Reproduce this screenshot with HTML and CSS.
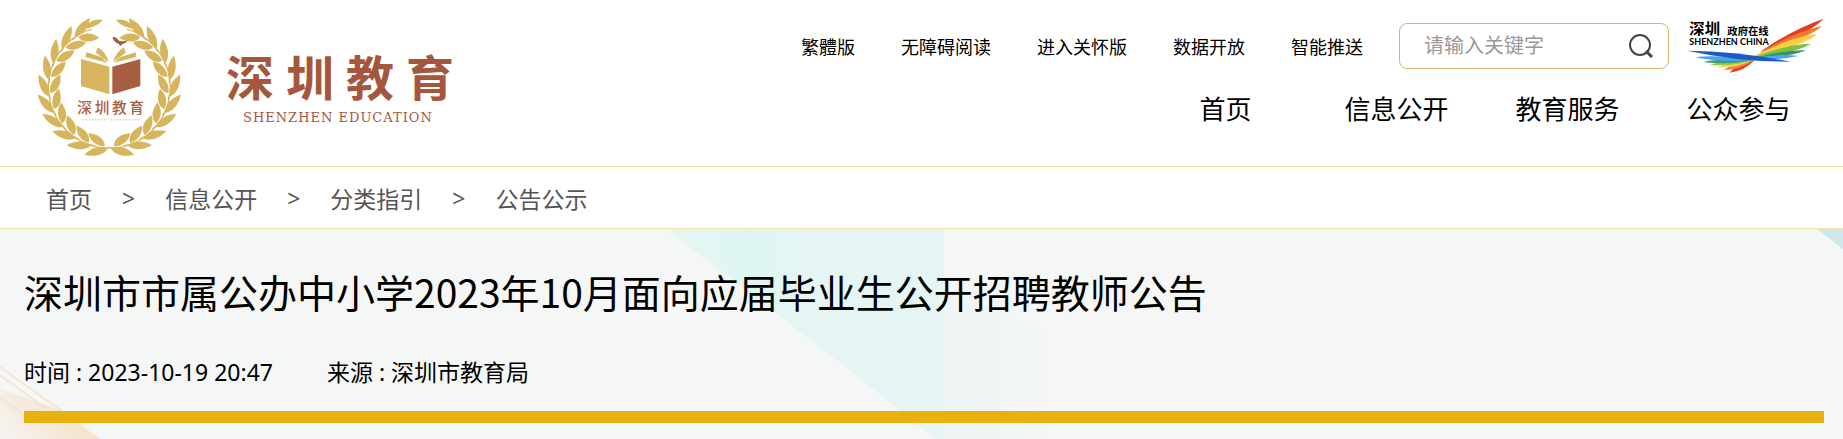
FILE: index.html
```html
<!DOCTYPE html>
<html lang="zh-CN">
<head>
    <meta charset="UTF-8">
    <meta name="viewport" content="width=device-width, initial-scale=1.0">
    <title>深圳市市属公办中小学2023年10月面向应届毕业生公开招聘教师公告</title>
    <link rel="stylesheet" href="styles.css">
</head>
<body>
    <header class="header">
        <a class="brand" href="#" aria-label="深圳教育">
            <svg class="emblem" viewBox="0 0 540 495">
                <defs>
                    <g id="leaf">
                        <path d="M270 446C250 437 222 442 200 467C232 474 258 464 270 446Z"/>
                        <path d="M260 440C262 420 240 402 210 402C216 426 236 440 260 440Z"/>
                        <path d="M280 440Q250 447 214 434L214 438Q250 451 280 444Z"/>
                    </g>
                    <g id="branch">
                        <use href="#leaf" transform="rotate(2 268 262)"/>
                        <use href="#leaf" transform="rotate(18 268 262)"/>
                        <use href="#leaf" transform="rotate(34 268 262)"/>
                        <use href="#leaf" transform="rotate(50 268 262)"/>
                        <use href="#leaf" transform="rotate(66 268 262)"/>
                        <use href="#leaf" transform="rotate(82 268 262)"/>
                        <use href="#leaf" transform="rotate(98 268 262)"/>
                        <use href="#leaf" transform="rotate(114 268 262)"/>
                        <use href="#leaf" transform="rotate(130 268 262)"/>
                        <use href="#leaf" transform="rotate(146 268 262)"/>
                    </g>
                </defs>
                <g fill="#d6b55e">
                    <use href="#branch"/>
                    <use href="#branch" transform="translate(536 0) scale(-1 1)"/>
                    <path d="M190 88C202 66 226 54 248 60C238 74 214 84 190 88Z"/>
                    <path d="M346 88C334 66 310 54 288 60C298 74 322 84 346 88Z"/>
                    <path d="M183 177L268 200V283L183 258Z"/>
                    <path d="M200 157L246 172L262 188L196 171Z"/>
                    <path d="M233 142Q258 156 266 186L228 158Z"/>
                    <path d="M312 142Q288 156 279 186L317 158Z"/>
                    <path d="M347 157L300 172L282 188L349 171Z"/>
                </g>
                <g fill="#a85e42">
                    <path d="M277 200L361 177V258L277 283Z"/>
                    <path d="M277 112Q288 108 294 119Q300 127 323 121Q316 132 307 133L300 139L297 132Q282 128 277 112Z"/>
                </g>
                <text class="emblem-name" x="172" y="340">深圳教育</text>
                <path d="M188 359H262M272 359H357" stroke="#e6d3cc" stroke-width="5" stroke-dasharray="5 4"/>
            </svg>
            <span class="wordmark">
                <span class="wordmark-cn">深圳教育</span>
                <span class="wordmark-en">SHENZHEN EDUCATION</span>
            </span>
        </a>
        <div class="header-right">
            <div class="tools">
                <nav class="tool-links">
                    <a href="#" lang="zh-TW">繁體版</a>
                    <a href="#">无障碍阅读</a>
                    <a href="#">进入关怀版</a>
                    <a href="#">数据开放</a>
                    <a href="#">智能推送</a>
                </nav>
                <form class="search">
                    <input type="text" placeholder="请输入关键字" aria-label="请输入关键字">
                    <button type="button" aria-label="搜索">
                        <svg viewBox="0 0 24 24" fill="none" stroke="#444" stroke-width="2">
                            <circle cx="11" cy="11" r="10"/>
                            <path d="M17 17L23 23" stroke-width="3"/>
                        </svg>
                    </button>
                </form>
                <a class="gov" href="#" aria-label="深圳政府在线">
                    <svg viewBox="21 42 411 165">
                        <path fill="#f0a23c" d="M213 164Q330 84 424 67Q400 96 213 164Z"/>
                        <path fill="#e63a24" d="M240 144Q330 80 430 44Q400 82 240 144Z"/>
                        <path fill="#ee7a2e" d="M250 140Q340 86 424 67Q400 92 250 140Z"/>
                        <path fill="#fbcf45" d="M213 164Q320 100 412 91Q380 120 213 164Z"/>
                        <path fill="#7cc142" d="M213 164Q310 122 393 119Q350 146 213 164Z"/>
                        <path fill="#3c9168" d="M213 166Q300 138 378 139Q330 160 213 166Z"/>
                        <path fill="#4aa3f5" d="M213 164Q300 148 355 156Q300 168 213 168Z"/>
                        <path fill="#e63a24" d="M225 168Q170 180 149 206Q190 202 225 168Z"/>
                        <path fill="#f08a34" d="M222 168Q160 176 131 198Q180 198 222 168Z"/>
                        <path fill="#fbd65a" d="M220 168Q150 172 112 190Q170 192 220 168Z"/>
                        <path fill="#8ccb4a" d="M220 168Q130 166 90 183Q160 188 220 168Z"/>
                        <path fill="#3f9e72" d="M220 168Q120 162 69 174Q140 184 220 168Z"/>
                        <path fill="#4aa3f5" d="M220 168Q100 150 44 160Q120 176 220 168Z"/>
                        <path fill="#1b5bc4" d="M22 140Q180 142 331 173Q180 174 22 140Z"/>
                        <text class="gov-name" x="28" y="91">深圳</text>
                        <text class="gov-sub" x="142" y="93">政府在线</text>
                        <text class="gov-en" x="28" y="122">SHENZHEN CHINA</text>
                    </svg>
                </a>
            </div>
            <nav class="main-nav">
                <a href="#">首页</a>
                <a href="#">信息公开</a>
                <a href="#">教育服务</a>
                <a href="#">公众参与</a>
            </nav>
        </div>
    </header>

    <nav class="breadcrumb">
        <a href="#">首页</a>
        <span>&gt;</span>
        <a href="#">信息公开</a>
        <span>&gt;</span>
        <a href="#">分类指引</a>
        <span>&gt;</span>
        <a href="#">公告公示</a>
    </nav>

    <main class="article">
        <svg class="backdrop" viewBox="0 0 1843 210" preserveAspectRatio="xMidYMin slice" aria-hidden="true">
            <defs>
                <linearGradient id="teal" x1="0" y1="0" x2="1" y2="0">
                    <stop offset="0" stop-color="#e8f6f4"/>
                    <stop offset="0.3" stop-color="#def6f1"/>
                    <stop offset="0.5" stop-color="#e5f5f3"/>
                    <stop offset="1" stop-color="#e4f5f3"/>
                </linearGradient>
                <linearGradient id="sand" x1="0" y1="1" x2="1" y2="0.6">
                    <stop offset="0" stop-color="#f6f4f1"/>
                    <stop offset="1" stop-color="#f4dfc4"/>
                </linearGradient>
                <linearGradient id="mist" x1="0" y1="0" x2="1" y2="0">
                    <stop offset="0" stop-color="#eef5f4"/>
                    <stop offset="1" stop-color="#f3f6f5"/>
                </linearGradient>
            </defs>
            <path d="M665 0H944V210H935Q800 100 665 0Z" fill="url(#teal)"/>
            <path d="M944 60L1043 100V210H944Z" fill="url(#mist)"/>
            <path d="M1817 0H1843V20Z" fill="#cfe6ec"/>
            <path d="M0 160L30 170L62 182L100 210H0Z" fill="url(#sand)"/>
            <path d="M0 138L62 182M0 146L52 184M0 168L26 188" fill="none" stroke="#f6e4cf" stroke-width="2"/>
        </svg>
        <h1>深圳市市属公办中小学2023年10月面向应届毕业生公开招聘教师公告</h1>
        <div class="meta">
            <span>时间 : 2023-10-19 20:47</span>
            <span>来源 : 深圳市教育局</span>
        </div>
        <hr>
    </main>
</body>
</html>
```

FILE: styles.css
```css
* {
    box-sizing: border-box;
}

body {
    margin: 0;
    min-height: 100vh;
    display: flex;
    flex-direction: column;
    font-family: "Noto Sans", "Noto Sans CJK SC", sans-serif;
    color: #000;
    background-color: #fff;
}

a {
    color: inherit;
    text-decoration: none;
}

.header {
    display: flex;
    justify-content: space-between;
    padding-right: 19px;
    border-bottom: 1px solid #f3e2a6;
}

.brand {
    display: flex;
    padding: 0 0 1px 20px;
    color: #a5573e;
}

.emblem {
    width: 180px;
    height: 165px;
}

.emblem-name {
    font-size: 44px;
    font-weight: 500;
    letter-spacing: 8px;
    fill: #a85e42;
}

.wordmark {
    display: flex;
    flex-direction: column;
    padding: 48px 0 0 26px;
}

.wordmark-cn {
    font-size: 48px;
    font-weight: bold;
    line-height: 60px;
    letter-spacing: 12px;
}

.wordmark-en {
    padding-left: 17px;
    font-family: "DejaVu Serif", serif;
    font-size: 13px;
    line-height: 20px;
    letter-spacing: 1px;
}

.header-right {
    display: flex;
    flex-direction: column;
    align-items: flex-end;
    padding-top: 18px;
}

.tools {
    display: flex;
    align-items: center;
}

.tool-links {
    display: flex;
    gap: 46px;
    margin-right: 36px;
    font-size: 18px;
}

.search {
    display: flex;
    align-items: center;
    width: 270px;
    height: 46px;
    margin-right: 18px;
    padding: 0 15px 0 24px;
    border: 1px solid #d3b76c;
    border-radius: 8px;
}

.search input {
    flex: 1;
    min-width: 0;
    padding: 0;
    border: none;
    outline: none;
    background: none;
    font-family: inherit;
    font-size: 20px;
}

.search input::placeholder {
    color: #999;
}

.search button {
    width: 24px;
    height: 24px;
    padding: 0;
    border: none;
    background: none;
    cursor: pointer;
}

.search svg,
.gov svg {
    display: block;
}

.gov svg {
    width: 137px;
    height: 55px;
}

.gov-name {
    font-size: 46px;
    font-weight: bold;
}

.gov-sub {
    font-size: 31px;
    font-weight: bold;
}

.gov-en {
    font-family: Lato, sans-serif;
    font-size: 27px;
    font-weight: bold;
}

.main-nav {
    display: flex;
    margin-top: 17px;
    font-size: 26px;
    line-height: 38px;
}

.main-nav a {
    width: 171px;
    text-align: center;
}

.breadcrumb {
    display: flex;
    align-items: center;
    gap: 30px;
    height: 62px;
    padding: 0 46px;
    border-bottom: 1px solid #f3e2a6;
    font-size: 23px;
    color: #555;
}

.article {
    position: relative;
    flex: 1;
    padding: 36px 19px 16px 24px;
    background-color: #f5f7f6;
    overflow: hidden;
}

.backdrop {
    position: absolute;
    top: 0;
    left: 0;
    width: 100%;
    height: 100%;
}

h1,
.meta,
hr {
    position: relative;
}

h1 {
    margin: 0;
    font-family: "Noto Sans CJK SC", sans-serif;
    font-size: 39px;
    font-weight: normal;
    line-height: 52px;
}

.meta {
    display: flex;
    gap: 54px;
    margin-top: 38px;
    font-size: 23px;
    line-height: 34px;
}

hr {
    width: 100%;
    height: 12px;
    margin: 22px 0 0;
    border: none;
    background-color: #e8b10f;
}
```
